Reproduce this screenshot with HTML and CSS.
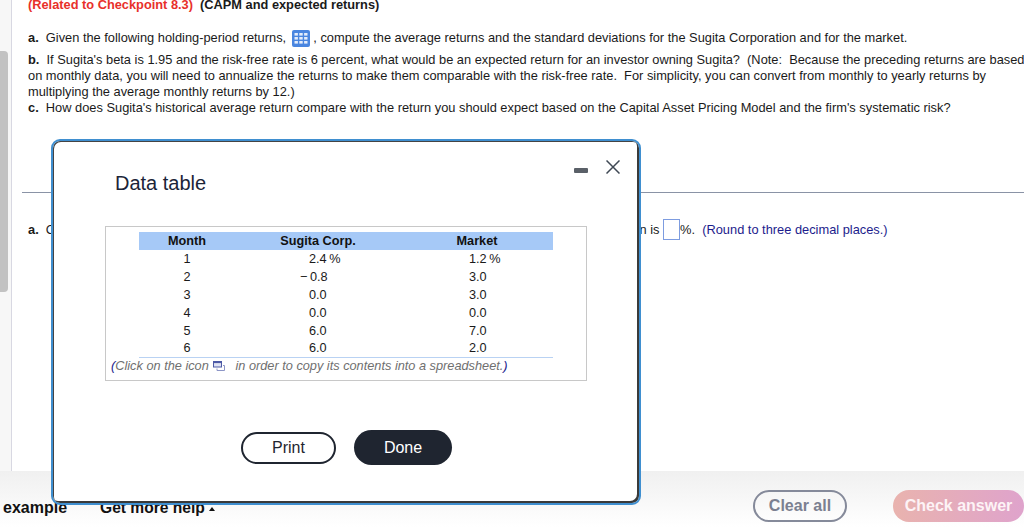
FILE: index.html
```html
<!DOCTYPE html>
<html lang="en">
<head>
    <meta charset="UTF-8">
    <meta name="viewport" content="width=device-width, initial-scale=1.0">
    <title>Data table</title>
    <link rel="stylesheet" href="styles.css">
</head>
<body>
    <div class="page">
        <div class="gutter"><div class="thumb"></div></div>

        <div class="main">
            <div class="question">
                <p class="title"><span class="related">(Related to Checkpoint 8.3)</span>&nbsp; (CAPM and expected returns)</p>
                <p class="part-a"><b>a.</b>&nbsp; Given the following holding-period returns,
                    <svg class="grid-icon" width="18" height="17" viewBox="0 0 18 17">
                        <rect width="18" height="17" rx="2" fill="#4a86e0"/>
                        <g fill="#fff" fill-opacity="0.85">
                            <rect x="2.5" y="3" width="3.4" height="2.6"/><rect x="7.3" y="3" width="3.4" height="2.6"/><rect x="12.1" y="3" width="3.4" height="2.6"/>
                            <rect x="2.5" y="7" width="3.4" height="2.6"/><rect x="7.3" y="7" width="3.4" height="2.6"/><rect x="12.1" y="7" width="3.4" height="2.6"/>
                            <rect x="2.5" y="11" width="3.4" height="2.6"/><rect x="7.3" y="11" width="3.4" height="2.6"/><rect x="12.1" y="11" width="3.4" height="2.6"/>
                        </g>
                    </svg>
                    , compute the average returns and the standard deviations for the Sugita Corporation and for the market.</p>
                <p class="part-b"><b>b.</b>&nbsp; If Sugita's beta is 1.95 and the risk-free rate is 6 percent, what would be an expected return for an investor owning Sugita?&nbsp; (Note:&nbsp; Because the preceding returns are based on monthly data, you will need to annualize the returns to make them comparable with the risk-free rate.&nbsp; For simplicity, you can convert from monthly to yearly returns by multiplying the average monthly returns by 12.)</p>
                <p class="part-c"><b>c.</b>&nbsp; How does Sugita's historical average return compare with the return you should expect based on the Capital Asset Pricing Model and the firm's systematic risk?</p>
            </div>

            <div class="divider"></div>

            <p class="answer"><b>a.</b>&nbsp; Compute the average monthly return for Sugita stocks. The average monthly return for Sugita Corporation is <span class="answer-box"></span>%.&nbsp; <span class="hint">(Round to three decimal places.)</span></p>
        </div>
    </div>

    <div class="footer">
        <div class="footer-left">
            <span class="example">example</span>
            <span class="help">Get more help <span class="caret"></span></span>
        </div>
        <div class="footer-right">
            <button class="clear-btn">Clear all</button>
            <button class="check-btn">Check answer</button>
        </div>
    </div>

    <div class="modal">
        <div class="modal-controls">
            <span class="minimize"></span>
            <svg width="14" height="14" viewBox="0 0 14 14"><path d="M0.5 0.5 L13.5 13.5 M13.5 0.5 L0.5 13.5" stroke="#3f4854" stroke-width="1.5" fill="none"/></svg>
        </div>
        <h2 class="modal-title">Data table</h2>

        <div class="table-box">
            <table class="data-table">
                <thead>
                    <tr><th class="col-month">Month</th><th class="col-sugita">Sugita Corp.</th><th class="col-market">Market</th></tr>
                </thead>
                <tbody>
                    <tr><td class="month">1</td><td class="sugita">2.4&#8201;%</td><td class="market">1.2&#8201;%</td></tr>
                    <tr><td class="month">2</td><td class="sugita"><span class="neg">&minus;&#8201;</span>0.8</td><td class="market">3.0</td></tr>
                    <tr><td class="month">3</td><td class="sugita">0.0</td><td class="market">3.0</td></tr>
                    <tr><td class="month">4</td><td class="sugita">0.0</td><td class="market">0.0</td></tr>
                    <tr><td class="month">5</td><td class="sugita">6.0</td><td class="market">7.0</td></tr>
                    <tr><td class="month">6</td><td class="sugita">6.0</td><td class="market">2.0</td></tr>
                </tbody>
            </table>
            <p class="caption"><span class="paren">(</span>Click on the icon
                <svg class="copy-icon" width="12" height="10" viewBox="0 0 12 10">
                    <rect x="0.5" y="0.5" width="8" height="5.5" fill="#dfe3f3" stroke="#4d5aa6"/>
                    <rect x="0.5" y="0.5" width="8" height="1.6" fill="#4d5aa6"/>
                    <path d="M10 4.5 H11.5 V9.5 H4 V7.5" fill="none" stroke="#8c95c6"/>
                </svg>
                &nbsp;in order to copy its contents into a spreadsheet.<span class="paren">)</span></p>
        </div>

        <div class="modal-buttons">
            <button class="print-btn">Print</button>
            <button class="done-btn">Done</button>
        </div>
    </div>
</body>
</html>
```

FILE: styles.css
```css
html, body {
    margin: 0;
    height: 527px;
    overflow: hidden;
}
body {
    font-family: "Liberation Sans", Arial, sans-serif;
    font-size: 12.83px;
    color: #1a1a1a;
    background: white;
    position: relative;
}
p {
    margin: 0;
}
.page {
    display: flex;
    height: 471px;
}
.gutter {
    width: 11px;
    background: #f7f7f7;
    border-right: 1px solid #d8d8e2;
    padding-top: 51px;
    box-sizing: content-box;
}
.thumb {
    width: 8px;
    height: 241px;
    background: #c2c2c2;
    border-radius: 0 4px 4px 0;
}
.main {
    flex: 1;
    min-width: 0;
}
.question {
    padding: 0 0 0 16px;
    line-height: 16px;
    margin-right: -2px;
}
.title {
    font-size: 12.8px;
    font-weight: bold;
    margin-top: -3px;
}
.related {
    color: #e8302a;
}
.part-a {
    margin-top: 17px;
    height: 17px;
    white-space: nowrap;
}
.grid-icon {
    vertical-align: -5px;
    margin: 0 0 0 2px;
}
.part-b {
    margin-top: 5px;
}
.part-c {
    margin-top: 0;
}
.divider {
    height: 1px;
    background: #8a93a6;
    margin: 76px 0 0 10px;
}
.answer {
    margin: 26px 0 0 16px;
    white-space: nowrap;
    line-height: 20px;
}
.answer-box {
    display: inline-block;
    width: 15px;
    height: 19px;
    border: 1px solid #7d9ce0;
    vertical-align: -6px;
}
.hint {
    color: #1c1c8c;
}
.footer {
    height: 56px;
    background: linear-gradient(#f0f0f0, #fff);
    display: flex;
    justify-content: space-between;
    align-items: center;
    padding-top: 14px;
    box-sizing: border-box;
}
.footer-left {
    display: flex;
    gap: 33px;
    padding: 3px 0 0 3px;
    font-size: 15.6px;
    font-weight: bold;
    color: #111;
}
.example {
    font-size: 16px;
}
.caret {
    display: inline-block;
    width: 0;
    height: 0;
    border-left: 3.5px solid transparent;
    border-right: 3.5px solid transparent;
    border-bottom: 4px solid #111;
    vertical-align: 2px;
}
.footer-right {
    display: flex;
    gap: 46px;
}
button {
    font-family: "Liberation Sans", Arial, sans-serif;
    cursor: pointer;
    box-sizing: border-box;
}
.clear-btn {
    width: 94px;
    height: 32px;
    background: transparent;
    border: 2px solid #858a9a;
    border-radius: 16px;
    color: #7b8090;
    font-size: 16px;
    font-weight: bold;
    padding: 0;
}
.check-btn {
    width: 131px;
    height: 32px;
    background: linear-gradient(90deg, #e9b3ae, #dfa3cc);
    border: 0;
    border-radius: 16px;
    color: #fdf3f6;
    font-size: 16px;
    font-weight: bold;
    padding: 0;
}
.modal {
    position: absolute;
    left: 51px;
    top: 139px;
    width: 590px;
    height: 366px;
    box-sizing: border-box;
    background: white;
    border: 2px solid #3f8fd0;
    border-radius: 9px;
    box-shadow: inset 1px 1px 0 #444, inset -2px -2px 0 #3a3a3a;
    padding: 0 0 0 52px;
    display: flex;
    flex-direction: column;
}
.modal-controls {
    position: absolute;
    top: 19px;
    right: 19px;
    display: flex;
    align-items: center;
    gap: 18px;
}
.minimize {
    width: 14px;
    height: 5px;
    border-radius: 1px;
    background: #5a6068;
    margin-top: 6px;
}
.modal-title {
    margin: 30px 0 0 10px;
    font-size: 20px;
    font-weight: normal;
    color: #1b2438;
    line-height: 24px;
}
.table-box {
    margin-top: 31px;
    width: 482px;
    height: 155px;
    box-sizing: border-box;
    border: 1px solid #c8c8c8;
    padding: 5px 0 0 33px;
}
.data-table {
    border-collapse: collapse;
    table-layout: fixed;
    width: 414px;
    font-size: 12.7px;
    line-height: 18px;
    border-bottom: 1px solid #b9d2f3;
}
.data-table th {
    background: #a6c9f7;
    padding: 0;
    color: #111;
}
.data-table td {
    padding: 0;
    height: 18px;
}
.data-table tbody tr:last-child td {
    height: 17px;
    line-height: 17px;
}
.col-month {
    width: 96px;
}
.col-sugita {
    width: 166px;
}
.month {
    text-align: center;
}
.sugita {
    padding-left: 74px !important;
}
.market {
    padding-left: 68px !important;
}
.neg {
    margin-left: -9px;
}
.caption {
    margin: -1px 0 0 -28px;
    font-size: 12.75px;
    font-style: italic;
    color: #6f6f6f;
    line-height: 17px;
    white-space: nowrap;
}
.paren {
    color: #1c1c8c;
}
.copy-icon {
    vertical-align: -1px;
    margin: 0 3px 0 1px;
}
.modal-buttons {
    display: flex;
    align-items: center;
    gap: 18px;
    margin: 49px 0 0 136px;
}
.print-btn {
    width: 95px;
    height: 32px;
    background: white;
    border: 2px solid #1f2530;
    border-radius: 16px;
    color: #1f2530;
    font-size: 16px;
    padding: 0;
}
.done-btn {
    width: 98px;
    height: 35px;
    background: #1f2530;
    border: 0;
    border-radius: 18px;
    color: white;
    font-size: 16px;
    padding: 0;
}
```
